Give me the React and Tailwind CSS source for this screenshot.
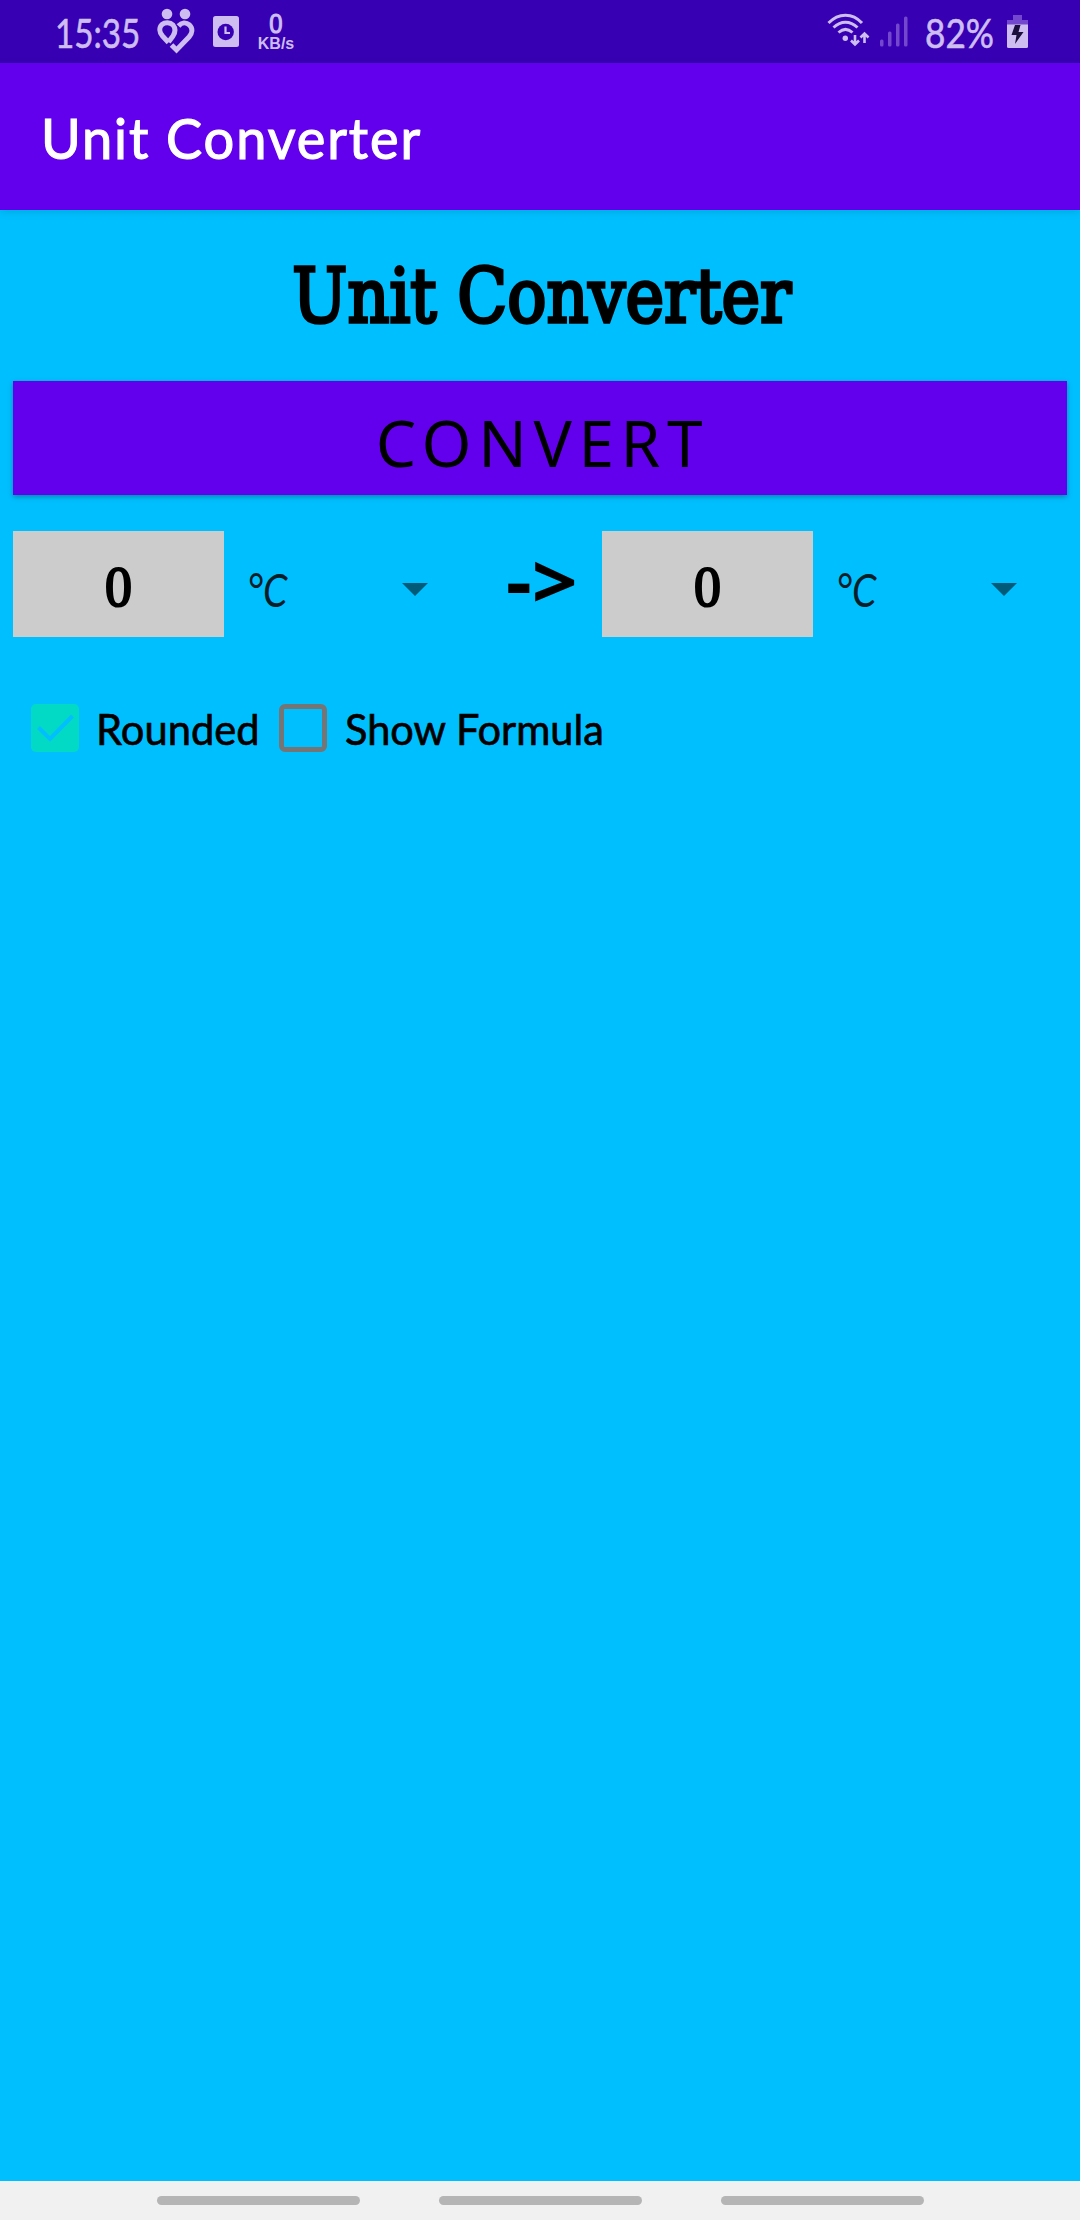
import React from "react";

function HeartIcon() {
  return (
    <svg className="ml-[17px] mt-[8px] h-[46px] w-[38px] shrink-0" viewBox="0 0 38 46" fill="none">
      <g fill="#cdbdf1">
        <circle cx="10" cy="6" r="5.3" />
        <circle cx="28" cy="6" r="5.3" />
      </g>
      <g stroke="#cdbdf1" strokeWidth="5">
        <path d="M11.5 34.5 5.5 28C2 24 2 19.500 5 16.500C8 14 13 14 16 17C18.500 20 18.500 24 16 28L11.500 34" />
        <path d="M21.500 18C24.500 14.500 29 14 32.500 17C36 20.500 35.500 25 32 29L19.500 42L14.500 37" />
      </g>
    </svg>
  );
}

function ClockCardIcon() {
  return (
    <svg className="ml-[18px] mt-[16px] h-[31px] w-[26px] shrink-0" viewBox="0 0 26 31">
      <rect width="26" height="31" rx="2.500" fill="#cdbdf1" />
      <circle cx="12.700" cy="16" r="8.200" fill="#3700b3" />
      <path d="M12.500 10.500V17H17" fill="none" stroke="#cdbdf1" strokeWidth="2.200" />
    </svg>
  );
}

function WifiIcon() {
  return (
    <svg className="mt-[13px] h-[35px] w-[44px] shrink-0" viewBox="0 0 44 35" fill="none" stroke="#cdbdf1" strokeWidth="3">
      <path d="M1.500 10C11.500-.5 25.500-.5 35 10" />
      <path d="M6.500 14.500C14 7.500 23 7.500 30.500 14.500" />
      <path d="M11.500 19.500C16 15.500 21 15.500 25.500 19.500" />
      <circle cx="18.300" cy="25.300" r="2.700" fill="#cdbdf1" stroke="none" />
      <g strokeWidth="2.600">
        <path d="M28 22V32M24 27.500 28 31.500 32 27.500" />
        <path d="M37.500 30V20M33.500 24.500 37.500 20.500 41.500 24.500" />
      </g>
    </svg>
  );
}

function SignalIcon() {
  return (
    <svg className="ml-[9px] mt-[16px] h-[31px] w-[28px] shrink-0" viewBox="0 0 28 31" fill="#7347ce">
      <rect x="0" y="23.500" width="3.500" height="7" rx="1.500" />
      <rect x="8" y="15.500" width="3.500" height="15" rx="1.500" />
      <rect x="16" y="7.500" width="3.500" height="23" rx="1.500" />
      <rect x="24" y=".5" width="3.500" height="30" rx="1.500" />
    </svg>
  );
}

function BatteryIcon() {
  return (
    <svg className="mt-[15px] h-[33px] w-[21px] shrink-0" viewBox="0 0 21 33">
      <path d="M6 0H15V5H21V10H0V5H6Z" fill="#7347ce" />
      <path d="M0 9.500H21V31.500Q21 33 19.500 33H1.500Q0 33 0 31.500Z" fill="#cdbdf1" />
      <path d="M8 10H13.500L11.500 17H16.500L8 29L9.500 20H4.500Z" fill="#1b0d3c" />
    </svg>
  );
}

function StatusBar() {
  return (
    <header className="flex h-[63px] items-start bg-[#3700b3] text-[#cdbdf1]">
      <div className="ml-[55px] mt-[13px] w-[85px] shrink-0 whitespace-nowrap font-['Lato'] text-[40px] leading-[40px]">
        <span className="inline-block origin-left scale-x-[.83] [-webkit-text-stroke:.6px]">15:35</span>
      </div>
      <HeartIcon />
      <ClockCardIcon />
      <div className="ml-[17px] mt-[11px] flex w-[40px] flex-col items-center">
        <span className="scale-x-[.85] font-['Liberation_Sans'] text-[28px] leading-[26px] [-webkit-text-stroke:1.200px]">0</span>
        <span className="font-['Liberation_Sans'] text-[16px] font-bold leading-[14px]">KB/s</span>
      </div>
      <div className="ml-[531px] flex items-start">
        <WifiIcon />
        <SignalIcon />
        <div className="ml-[17px] mt-[13px] w-[82px] shrink-0 whitespace-nowrap font-['Lato'] text-[40px] leading-[40px]">
          <span className="inline-block origin-left scale-x-[.88] [-webkit-text-stroke:.6px]">82%</span>
        </div>
        <BatteryIcon />
      </div>
    </header>
  );
}

function ValueBox() {
  return (
    <div className="flex h-[106px] w-[211px] shrink-0 items-center justify-center bg-[#ccc]">
      <span className="mt-[6px] scale-x-[.93] font-['Liberation_Serif'] text-[58px] leading-none [-webkit-text-stroke:2.200px]">0</span>
    </div>
  );
}

function UnitSelect() {
  return (
    <div className="ml-[23px] flex h-[106px] w-[181px] shrink-0 items-center justify-between">
      <span className="mt-[12px] font-['Lato'] text-[46px] italic leading-none text-[#001f29]">
        <span className="inline-block origin-left scale-x-[.85] whitespace-nowrap">°C</span>
      </span>
      <svg className="mt-[11px] h-[13px] w-[26px]" viewBox="0 0 26 13">
        <path d="M0 0H26L13 13Z" fill="#005a78" />
      </svg>
    </div>
  );
}

function CheckedBox() {
  return (
    <svg className="h-[48px] w-[48px] shrink-0" viewBox="0 0 48 48">
      <rect width="48" height="48" rx="5" fill="#03dac5" />
      <path d="M7.500 23.500 19 35 41.500 12" fill="none" stroke="#00bfff" strokeWidth="4" />
    </svg>
  );
}

export default function App() {
  return (
    <div className="flex h-[2220px] w-[1080px] flex-col overflow-hidden bg-[#00bfff] text-black">
      <StatusBar />
      <div className="z-10 flex h-[147px] shrink-0 items-center bg-[#6200ee] pl-[41px] text-white shadow-[0_2px_8px_rgba(0,0,0,.12)]">
        <span className="mt-[2px] origin-left scale-x-[.95] whitespace-nowrap font-['Lato'] text-[57px] leading-none tracking-[2px] [-webkit-text-stroke:1.200px]">Unit Converter</span>
      </div>
      <main className="flex flex-1 flex-col">
        <h1 className="mt-[46px] flex h-[80px] items-center justify-center whitespace-nowrap pl-[4px] font-['DejaVu_Serif'] text-[74px] leading-none">
          <span className="inline-block scale-x-[.882] [-webkit-text-stroke:3.500px]">Unit Converter</span>
        </h1>
        <button className="mx-[13px] mt-[45px] flex h-[114px] items-center justify-center bg-[#6200ee] shadow-[0_2px_5px_rgba(0,0,0,.3)]">
          <span className="mt-[10px] pl-[5px] font-['Noto_Sans'] text-[64px] leading-none tracking-[6.600px]">CONVERT</span>
        </button>
        <section className="ml-[13px] mt-[36px] flex">
          <ValueBox />
          <UnitSelect />
          <div className="ml-[78px] mt-[5px] w-[96px] whitespace-nowrap font-['Noto_Sans'] text-[75px] font-bold leading-[88px]">
            <span className="inline-block origin-left scale-x-[1.07]">-&gt;</span>
          </div>
          <ValueBox />
          <UnitSelect />
        </section>
        <section className="ml-[31px] mt-[67px] flex h-[48px] items-center font-['Lato'] text-[43px] leading-none">
          <CheckedBox />
          <span className="ml-[17px] w-[183px] whitespace-nowrap">
            <span className="inline-block origin-left scale-x-[.97] [-webkit-text-stroke:.7px]">Rounded</span>
          </span>
          <span className="h-[48px] w-[48px] shrink-0 rounded-[6px] border-[5px] border-[#757575]" />
          <span className="ml-[18px] whitespace-nowrap">
            <span className="inline-block origin-left scale-x-[.965] [-webkit-text-stroke:.7px]">Show Formula</span>
          </span>
        </section>
      </main>
      <footer className="flex h-[39px] shrink-0 items-start gap-[79px] bg-[#f1f1f1] pl-[157px] pt-[15px]">
        <span className="h-[9px] w-[203px] rounded-full bg-[#b5b5b5]" />
        <span className="h-[9px] w-[203px] rounded-full bg-[#b5b5b5]" />
        <span className="h-[9px] w-[203px] rounded-full bg-[#b5b5b5]" />
      </footer>
    </div>
  );
}
